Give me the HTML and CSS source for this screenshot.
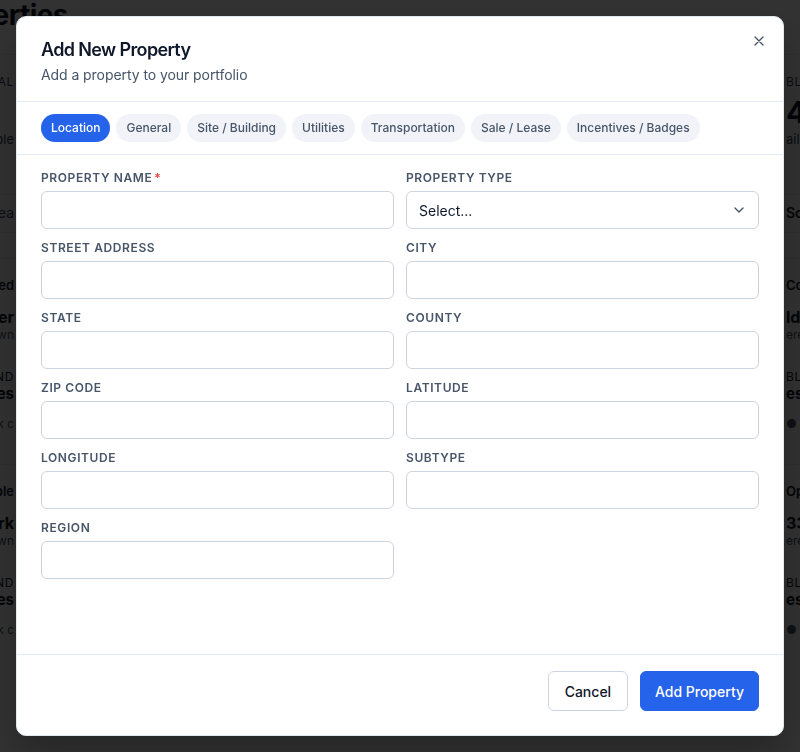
FILE: index.html
```html
<!DOCTYPE html>
<html lang="en">
<head>
    <meta charset="UTF-8">
    <title>Properties</title>
    <link rel="stylesheet" href="styles.css">
</head>
<body>

<div class="page">
    <div class="page-title">Properties</div>

    <div class="split stats">
        <div class="side left">
            <div class="stat-label">TOTAL</div>
            <div class="stat-value"></div>
            <div class="stat-note">available</div>
        </div>
        <div></div>
        <div class="side">
            <div class="stat-label">BLOCKS</div>
            <div class="stat-value">4</div>
            <div class="stat-note">ail</div>
        </div>
    </div>

    <div class="split toolbar">
        <div class="side left">
            <div class="toolbar-text">Sea</div>
        </div>
        <div></div>
        <div class="side">
            <div class="toolbar-text bold">Sort</div>
        </div>
    </div>

    <div class="split cards">
        <div class="side left">
            <div class="card">
                <div class="card-tag">Listed</div>
                <div class="card-name">Eastwind Center</div>
                <div class="card-sub">Downtown</div>
                <div class="card-label">AVAILABLE LAND</div>
                <div class="card-name small">12 acres</div>
                <div class="card-sub">Industrial Park c</div>
            </div>
            <div class="card">
                <div class="card-tag">Available</div>
                <div class="card-name">Northern Park</div>
                <div class="card-sub">Downtown</div>
                <div class="card-label">AVAILABLE LAND</div>
                <div class="card-name small">30 acres</div>
                <div class="card-sub">Industrial Park c</div>
            </div>
        </div>
        <div></div>
        <div class="side">
            <div class="card">
                <div class="card-tag">Coming</div>
                <div class="card-name">ld Mill</div>
                <div class="card-sub">ere</div>
                <div class="card-label">BL</div>
                <div class="card-name small">es</div>
                <div class="card-sub">&#9679; Vacant</div>
            </div>
            <div class="card">
                <div class="card-tag">Open</div>
                <div class="card-name">33 Main</div>
                <div class="card-sub">ere</div>
                <div class="card-label">BL</div>
                <div class="card-name small">es</div>
                <div class="card-sub">&#9679; Vacant</div>
            </div>
        </div>
    </div>
</div>

<div class="overlay">
    <div class="modal">
        <div class="modal-header">
            <div class="modal-title">Add New Property</div>
            <div class="modal-subtitle">Add a property to your portfolio</div>
            <button class="close-button" aria-label="Close">
                <svg width="16" height="16" viewBox="0 0 24 24" fill="none" stroke="currentColor" stroke-width="2" stroke-linecap="round">
                    <path d="M18 6 6 18M6 6l12 12"/>
                </svg>
            </button>
        </div>

        <div class="tabs">
            <span class="tab active">Location</span>
            <span class="tab">General</span>
            <span class="tab">Site / Building</span>
            <span class="tab">Utilities</span>
            <span class="tab">Transportation</span>
            <span class="tab">Sale / Lease</span>
            <span class="tab">Incentives / Badges</span>
        </div>

        <div class="modal-body">
            <div class="form-grid">
                <div class="field">
                    <label>Property Name<span class="required">*</span></label>
                    <input type="text">
                </div>
                <div class="field">
                    <label>Property Type</label>
                    <div class="select">
                        <span>Select...</span>
                        <svg width="16" height="16" viewBox="0 0 24 24" fill="none" stroke="currentColor" stroke-width="2" stroke-linecap="round" stroke-linejoin="round">
                            <path d="m6 9 6 6 6-6"/>
                        </svg>
                    </div>
                </div>
                <div class="field">
                    <label>Street Address</label>
                    <input type="text">
                </div>
                <div class="field">
                    <label>City</label>
                    <input type="text">
                </div>
                <div class="field">
                    <label>State</label>
                    <input type="text">
                </div>
                <div class="field">
                    <label>County</label>
                    <input type="text">
                </div>
                <div class="field">
                    <label>Zip Code</label>
                    <input type="text">
                </div>
                <div class="field">
                    <label>Latitude</label>
                    <input type="text">
                </div>
                <div class="field">
                    <label>Longitude</label>
                    <input type="text">
                </div>
                <div class="field">
                    <label>Subtype</label>
                    <input type="text">
                </div>
                <div class="field">
                    <label>Region</label>
                    <input type="text">
                </div>
            </div>
        </div>

        <div class="modal-footer">
            <button class="btn btn-outline">Cancel</button>
            <button class="btn btn-primary">Add Property</button>
        </div>
    </div>
</div>

</body>
</html>
```

FILE: styles.css
```css
* {
    box-sizing: border-box;
    margin: 0;
    padding: 0;
}

html, body {
    height: 100%;
    overflow: hidden;
}

body {
    background-color: #F8FAFC;
    font-family: 'Inter', sans-serif;
    color: #0F172A;
}

/* background page (sits under the dialog) */

.page {
    width: 800px;
    white-space: nowrap;
}

.page-title {
    display: flex;
    justify-content: flex-end;
    width: 68px;
    font-size: 28px;
    font-weight: 700;
    line-height: 30px;
    letter-spacing: -0.02em;
    padding-bottom: 24px;
}

.split {
    display: grid;
    grid-template-columns: 14px 1fr 14px;
    border-top: 1px solid #E2E8F0;
}

.side {
    display: flex;
    flex-direction: column;
}

.side.left {
    align-items: flex-end;
}

.side.left > * {
    display: flex;
    flex-direction: column;
    align-items: flex-end;
}

.stats {
    padding: 19px 0 46px;
}

.stat-label {
    font-size: 12px;
    line-height: 16px;
    letter-spacing: 0.05em;
    color: #334155;
}

.stat-value {
    margin-top: 4px;
    height: 36px;
    font-size: 30px;
    font-weight: 700;
    line-height: 36px;
}

.stat-note {
    font-size: 13px;
    line-height: 18px;
    color: #334155;
}

.toolbar {
    padding: 8px 0 9px;
    border-bottom: 1px solid #E2E8F0;
    margin-bottom: 24px;
}

.toolbar-text {
    font-size: 14px;
    line-height: 20px;
    color: #334155;
}

.toolbar-text.bold {
    font-weight: 600;
    color: #0F172A;
}

.card {
    padding: 17px 0 32px;
    border-top: 1px solid #E2E8F0;
}

.card-tag {
    font-size: 13px;
    font-weight: 600;
    line-height: 18px;
}

.card-name {
    margin-top: 13px;
    font-size: 16px;
    font-weight: 700;
    line-height: 20px;
}

.card-name.small {
    margin-top: 0;
    font-size: 15px;
    line-height: 18px;
}

.card-sub {
    font-size: 12px;
    line-height: 16px;
    color: #475569;
}

.card-sub:last-child {
    margin-top: 13px;
}

.card-label {
    margin-top: 26px;
    font-size: 12px;
    line-height: 16px;
    letter-spacing: 0.05em;
}

/* dialog */

.overlay {
    position: fixed;
    inset: 0;
    background: rgba(0, 0, 0, 0.8);
    display: flex;
    justify-content: center;
    align-items: center;
    padding: 16px;
}

.modal {
    position: relative;
    width: 768px;
    height: 720px;
    background: #FFFFFF;
    border: 1px solid #E2E8F0;
    border-radius: 10px;
    box-shadow: 0 20px 40px rgba(0, 0, 0, 0.25);
    display: flex;
    flex-direction: column;
    overflow: hidden;
}

.modal-header {
    padding: 20px 24px 16px;
    border-bottom: 1px solid #E2EAF4;
}

.modal-title {
    font-size: 18px;
    font-weight: 600;
    line-height: 26px;
    letter-spacing: -0.035em;
    color: #0F172A;
}

.modal-subtitle {
    margin-top: 2px;
    font-size: 14px;
    line-height: 20px;
    letter-spacing: -0.005em;
    color: #475569;
}

.close-button {
    position: absolute;
    top: 16px;
    right: 16px;
    width: 16px;
    height: 16px;
    background: none;
    border: none;
    color: #475569;
    cursor: pointer;
    display: flex;
}

.tabs {
    display: flex;
    gap: 6px;
    padding: 12px 24px;
    border-bottom: 1px solid #E2EAF4;
}

.tab {
    height: 28px;
    padding: 0 10px;
    border-radius: 999px;
    background: #F1F3F8;
    color: #475569;
    font-size: 12px;
    font-weight: 500;
    line-height: 28px;
    white-space: nowrap;
    cursor: pointer;
}

.tab.active {
    background: #2563EB;
    color: #FFFFFF;
}

.modal-body {
    flex: 1;
    padding: 14px 24px;
    overflow: auto;
}

.form-grid {
    display: grid;
    grid-template-columns: 1fr 1fr;
    column-gap: 12px;
    row-gap: 10px;
}

.field label {
    display: block;
    font-size: 12px;
    font-weight: 600;
    line-height: 18px;
    letter-spacing: 0.05em;
    text-transform: uppercase;
    color: #475569;
    margin-bottom: 4px;
}

.required {
    color: #EF4444;
    margin-left: 2px;
}

.field input,
.select {
    display: block;
    width: 100%;
    height: 38px;
    border: 1px solid #CBD5E1;
    border-radius: 6px;
    background: #FFFFFF;
    font-family: inherit;
    font-size: 14px;
    color: #0F172A;
    padding: 0 12px;
}

.select {
    display: flex;
    align-items: center;
    justify-content: space-between;
    padding-right: 11px;
}

.select svg {
    color: #475569;
}

.modal-footer {
    display: flex;
    justify-content: flex-end;
    gap: 12px;
    padding: 16px 24px 24px;
    border-top: 1px solid #E2EAF4;
}

.btn {
    height: 40px;
    padding: 0 14px;
    border-radius: 6px;
    font-family: inherit;
    font-size: 14px;
    font-weight: 500;
    white-space: nowrap;
    cursor: pointer;
}

.btn-outline {
    width: 80px;
    background: #FFFFFF;
    border: 1px solid #CBD5E1;
    color: #0F172A;
}

.btn-primary {
    background: #2563EB;
    border: 1px solid #2563EB;
    color: #FFFFFF;
}
```
